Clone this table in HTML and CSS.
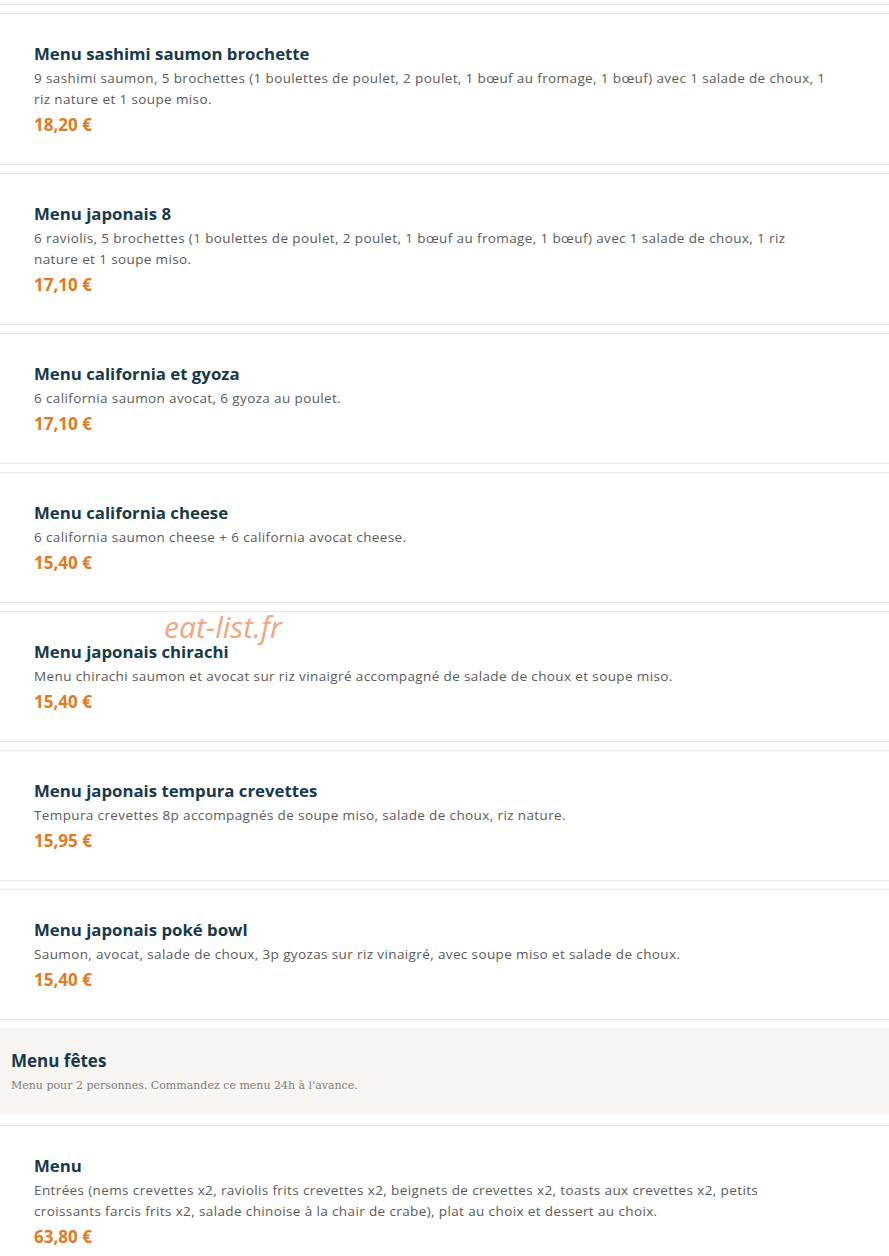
FILE: index.html
```html
<!DOCTYPE html>
<html lang="fr">
<head>
<meta charset="utf-8">
<title>Menus</title>
<link rel="stylesheet" href="styles.css">
</head>
<body>
<div class="page">
  <div class="list">
    <div class="stub"></div>

    <div class="item">
      <h3 class="item-title">Menu sashimi saumon brochette</h3>
      <p class="item-desc">9 sashimi saumon, 5 brochettes (1 boulettes de poulet, 2 poulet, 1 bœuf au fromage, 1 bœuf) avec 1 salade de choux, 1 riz nature et 1 soupe miso.</p>
      <div class="item-price">18,20 €</div>
    </div>

    <div class="item">
      <h3 class="item-title">Menu japonais 8</h3>
      <p class="item-desc">6 raviolis, 5 brochettes (1 boulettes de poulet, 2 poulet, 1 bœuf au fromage, 1 bœuf) avec 1 salade de choux, 1 riz nature et 1 soupe miso.</p>
      <div class="item-price">17,10 €</div>
    </div>

    <div class="item">
      <h3 class="item-title">Menu california et gyoza</h3>
      <p class="item-desc">6 california saumon avocat, 6 gyoza au poulet.</p>
      <div class="item-price">17,10 €</div>
    </div>

    <div class="item">
      <h3 class="item-title">Menu california cheese</h3>
      <p class="item-desc">6 california saumon cheese + 6 california avocat cheese.</p>
      <div class="item-price">15,40 €</div>
    </div>

    <div class="item">
      <span class="watermark">eat-list.fr</span>
      <h3 class="item-title">Menu japonais chirachi</h3>
      <p class="item-desc">Menu chirachi saumon et avocat sur riz vinaigré accompagné de salade de choux et soupe miso.</p>
      <div class="item-price">15,40 €</div>
    </div>

    <div class="item">
      <h3 class="item-title">Menu japonais tempura crevettes</h3>
      <p class="item-desc">Tempura crevettes 8p accompagnés de soupe miso, salade de choux, riz nature.</p>
      <div class="item-price">15,95 €</div>
    </div>

    <div class="item">
      <h3 class="item-title">Menu japonais poké bowl</h3>
      <p class="item-desc">Saumon, avocat, salade de choux, 3p gyozas sur riz vinaigré, avec soupe miso et salade de choux.</p>
      <div class="item-price">15,40 €</div>
    </div>
  </div>

  <section class="category">
    <h2 class="category-title">Menu fêtes</h2>
    <p class="category-desc">Menu pour 2 personnes. Commandez ce menu 24h à l'avance.</p>
  </section>

  <div class="list list-after">
    <div class="item">
      <h3 class="item-title">Menu</h3>
      <p class="item-desc">Entrées (nems crevettes x2, raviolis frits crevettes x2, beignets de crevettes x2, toasts aux crevettes x2, petits croissants farcis frits x2, salade chinoise à la chair de crabe), plat au choix et dessert au choix.</p>
      <div class="item-price">63,80 €</div>
    </div>
  </div>
</div>
</body>
</html>
```

FILE: styles.css
```css
html, body {
  margin: 0;
  padding: 0;
  background: #ffffff;
}

body {
  font-family: "Open Sans", "DejaVu Sans", sans-serif;
  color: #555555;
}

.page {
  width: 889px;
  overflow: hidden;
}

.list {
  display: flex;
  flex-direction: column;
  gap: 8px;
}

.list-after {
  margin-top: 11px;
}

.stub {
  height: 4px;
  border-bottom: 1px solid #e6e6e6;
}

.item {
  position: relative;
  border-top: 1px solid #e6e6e6;
  border-bottom: 1px solid #e6e6e6;
  padding: 28px 61px 28px 34px;
}

.item-title {
  margin: 0;
  font-size: 16.8px;
  line-height: 24px;
  font-weight: 700;
  color: #17394a;
}

.item-desc {
  margin: 2px 0 0;
  font-size: 13.5px;
  letter-spacing: 0.38px;
  line-height: 21px;
  color: #5a5a5a;
}

.item-price {
  margin-top: 4px;
  font-size: 17px;
  line-height: 22px;
  font-weight: 700;
  color: #e27a24;
}

.watermark {
  position: absolute;
  left: 164px;
  top: -5px;
  font-family: "Open Sans", sans-serif;
  font-style: italic;
  font-size: 30px;
  line-height: 40px;
  color: #f4a47e;
  pointer-events: none;
}

.category {
  margin-top: 8px;
  background: #f7f4f1;
  padding: 21px 11px 19px;
}

.category-title {
  margin: 0;
  font-size: 17px;
  line-height: 24px;
  font-weight: 700;
  color: #17394a;
}

.category-desc {
  margin: 4px 0 0;
  font-family: "DejaVu Serif", serif;
  font-size: 11px;
  line-height: 18px;
  color: #7d7d7d;
}
```
